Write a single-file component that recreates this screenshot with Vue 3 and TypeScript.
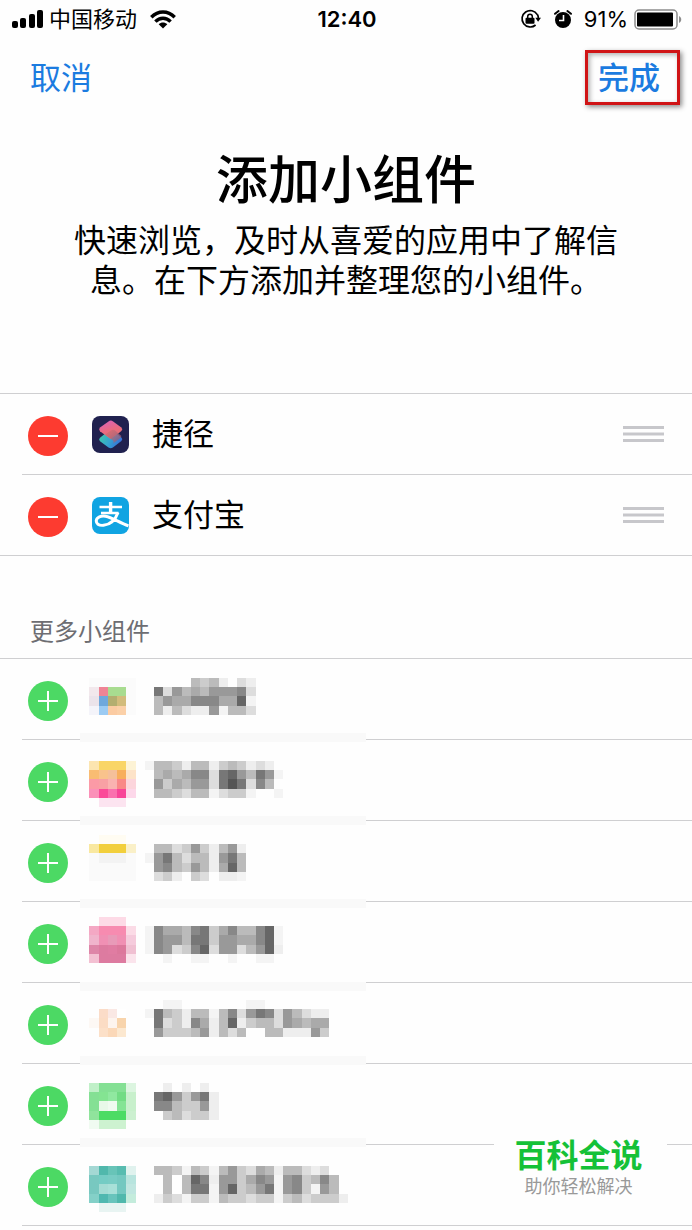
<script setup lang="ts">
interface Widget {
  id: string
  name: string
}

interface HiddenWidget {
  id: string
  top: number
  strip?: number
  icon: string[]
  label: string[]
}

interface Cell {
  x: number
  y: number
  fill: string
}

const active: Widget[] = [
  { id: 'shortcuts', name: '捷径' },
  { id: 'alipay', name: '支付宝' },
]

// Icon rows list one hex colour per cell; label rows hold one grey digit per cell.
const more: HiddenWidget[] = [
  {
    id: 'a', top: 19, strip: 74,
    icon: [
      'fbfbfb fbfbfb fbfbfb fbfbfb fbfbfb',
      'f2e8ec ef8495 a8dc90 a8dc90 fbfbfb',
      'ebe3ea 6fa8dc b3ae70 d2bc7c fbfbfb',
      'f4f4fa 9ccbf3 fbcba2 fbd0a8 fbfbfb',
    ],
    label: ['.....bcbe.de', '.7d9bab9998d', '.b9aa888aa6f', '.bebdee9fbbd'],
  },
  {
    id: 'b', top: 21, strip: 76,
    icon: [
      'fce5b0 f9d566 f9d566 f9d566 fdf3d5',
      'f9bc72 f9c38c f5c09a f8ae5c fde3c8',
      'fb9aa6 f8a0a4 fab2b0 f98887 fcd5dc',
      'fb90b8 fb4a98 fa70ae f84498 fdd8ea',
      '. fce4f0 fce4f0 fce4f0 .',
    ],
    label: ['fbbcebbecbcede.', '.baba88d769b79f', '.9cab99d757d8b.', '.bbcdbbfdccf..f'],
  },
  {
    id: 'c', top: 14, strip: 78,
    icon: [
      '. fffcf2 fffcf2 fffcf2 .',
      'f9e8a0 f2cf3c f2cf3c f2cf3c faf0c8',
      'fafafa f3f3f3 f3f3f3 f3f3f3 fafafa',
      'fafafa fafafa fafafa fafafa fafafa',
      'fafafa fafafa fafafa fafafa fafafa',
    ],
    label: ['', '.bbdc9ceb9e', 'f97bdbbe97b', '.98bc9bea6b', '.dce.cd.eef'],
  },
  {
    id: 'd', top: 15, strip: 80,
    icon: [
      '. fddae6 fddae6 fddae6 .',
      'f4a8c4 f78bb0 f78bb0 f78bb0 fbdbe6',
      'f0b4cc f090b4 e89ab8 f08fb3 f5cbdc',
      'de86a8 dd7ba0 e07ca2 dc789c f0c0d2',
      'f3c0d2 dd7ba0 dd7ba0 dd7ba0 fbe4ec',
    ],
    label: ['', 'f8aab87ca8bb86f', 'f899b77c99aa86f', 'f89dc86d99db96e', '..f..ff..f..ff.'],
  },
  {
    id: 'e', top: 17, strip: 73,
    icon: [
      '. . . . .',
      '. fbdcc8 fae8e4 ffffff .',
      'fdf8f4 fbdcc4 fdf4ee f8d4ac .',
      '. fce0c8 fbd8b8 fce8d0 .',
    ],
    label: ['..ff.......ff', 'f7bcebbfb8d978d9bdee', '.7dce8aeb6ecbbd9abaa', '.9cccb9ebdb..bbeee9c'],
  },
  {
    id: 'f', top: 19, strip: 74,
    icon: [
      'c0f0c8 84e094 84e094 84e094 dcf5e0',
      '84e094 84e492 90e8a0 72dc84 c8f0cc',
      '84e094 e8f8e8 f0faf0 84e494 c8f0cc',
      '90e49c 4cdc64 4cdc64 4cdc64 ccf0d0',
      'f0fbf1 cdf2d0 cdf2d0 cdf2d0 .',
    ],
    label: ['..e.e.e.', '.769c97e', '.88bcc9e', '..cbdcce'],
  },
  {
    id: 'g', top: 21,
    icon: [
      'a4d8d4 50b8ac 68c4b8 58bcb0 e0f2ee',
      '78c8c0 74ccc4 78ccc4 74c8c0 b8e4de',
      '78c8c0 a4dcd4 a8e0d8 74c8c0 c0e6e0',
      '84d0c8 50b8b0 68c4bc 50b8ac c4ecdc',
      '. e8f4f2 e8f4f2 e8f4f2 .',
    ],
    label: ['.bbcfbcfb9cdabebbded..', '..b.b68e99ca89f98cb8b.', '..b.b77f96cb97f98cf9b.', '.ecdfccfbccdccfcbdccce'],
  },
]

const LABEL_COLUMN = 6

function cells(widget: HiddenWidget): Cell[] {
  const out: Cell[] = []
  widget.icon.forEach((row, y) =>
    row.split(' ').forEach((c, x) => {
      if (c !== '.') out.push({ x, y, fill: '#' + c })
    }),
  )
  widget.label.forEach((row, y) =>
    [...row].forEach((c, x) => {
      if (c === '.') return
      out.push({ x: x + LABEL_COLUMN, y, fill: c === 'f' ? '#f4f4f4' : '#' + c + c + c })
    }),
  )
  return out
}
</script>

<template>
  <div class="page">
    <div class="status">
      <div class="side">
        <svg class="signal" width="32" height="20" viewBox="0 0 32 20" aria-hidden="true">
          <rect x="0" y="12" width="6" height="7" rx="2" />
          <rect x="8" y="9" width="6" height="10" rx="2" />
          <rect x="17" y="5" width="6" height="14" rx="2" />
          <rect x="25" y="1" width="6" height="18" rx="2" />
        </svg>
        <span class="carrier">中国移动</span>
        <svg class="wifi" width="26" height="19" viewBox="0 0 26 19" aria-hidden="true">
          <g fill="none" stroke="#000" stroke-width="3.4">
            <path d="M1.3 7.2C8 .2 18 .2 24.7 7.2" />
            <path d="M5.4 11.6c4.4-4.5 10.8-4.5 15.2 0" />
          </g>
          <path d="M8.7 14.2c2.4-2.3 6.200-2.3 8.600 0L13 18.600z" />
        </svg>
      </div>
      <span class="time">12:40</span>
      <div class="side right">
        <svg width="21" height="20" viewBox="0 0 21 20" aria-hidden="true">
          <path d="M17.300 5.600A8.200 8.200 0 1 0 15.600 16" fill="none" stroke="#000" stroke-width="1.700" />
          <path d="M17.300 5.200c.9 1.400 1.200 2.900 1.100 4.700" fill="none" stroke="#000" stroke-width="1.700" />
          <path d="M15.300 8.800h5.700l-2.900 4z" />
          <rect x="5.500" y="8.800" width="9" height="6" rx="1" />
          <path d="M7.700 9.500V7.600a2.300 2.300 0 0 1 4.600 0v1.900" fill="none" stroke="#000" stroke-width="1.500" />
        </svg>
        <svg class="alarm" width="20" height="20" viewBox="0 0 20 20" aria-hidden="true">
          <circle cx="10" cy="11" r="8" />
          <path d="M2 4.800L5.600 2M14.400 2L18 4.800" stroke="#000" stroke-width="2" stroke-linecap="round" />
          <path d="M10.500 6v5.500H6" fill="none" stroke="#fff" stroke-width="1.600" />
        </svg>
        <span class="percent">91%</span>
        <svg width="48" height="21" viewBox="0 0 48 21" aria-hidden="true">
          <rect x="1" y="1" width="42" height="19" rx="4" fill="none" stroke="#8c8c8c" stroke-width="1.500" />
          <rect x="3" y="3.500" width="36" height="14" rx="1" />
          <path d="M45 7c3 1.500 3 5.500 0 7z" fill="#8c8c8c" />
        </svg>
      </div>
    </div>

    <nav class="nav">
      <button type="button" class="cancel">取消</button>
      <button type="button" class="done">完成</button>
    </nav>

    <header class="intro">
      <h1>添加小组件</h1>
      <p>快速浏览，及时从喜爱的应用中了解信息。在下方添加并整理您的小组件。</p>
    </header>

    <ul class="list active">
      <li v-for="w in active" :key="w.id" class="row">
        <button type="button" class="toggle" :aria-label="'移除' + w.name">
          <svg width="40" height="40" viewBox="0 0 40 40">
            <circle cx="20" cy="20" r="20" fill="#fd3b30" />
            <path d="M10 20h20" stroke="#fff" stroke-width="2" />
          </svg>
        </button>
        <svg v-if="w.id === 'shortcuts'" class="app" width="37" height="37" viewBox="0 0 37 37" aria-hidden="true">
          <defs>
            <linearGradient id="sc-low" x1="0" y1="0.300" x2="1" y2="0.700">
              <stop offset="0" stop-color="#3fc9a8" />
              <stop offset=".5" stop-color="#35a3d0" />
              <stop offset="1" stop-color="#3568dc" />
            </linearGradient>
            <linearGradient id="sc-high" x1="0.300" y1="0" x2="0.700" y2="1">
              <stop offset="0" stop-color="#dc62b4" />
              <stop offset=".5" stop-color="#ea6a80" />
              <stop offset="1" stop-color="#e2706c" />
            </linearGradient>
            <linearGradient id="sc-fold" x1="0" y1="0" x2="1" y2="1">
              <stop offset="0" stop-color="#e2706c" />
              <stop offset="1" stop-color="#7a5c84" />
            </linearGradient>
          </defs>
          <rect width="37" height="37" rx="8" fill="#20214f" />
          <path d="M8 21.800l9-7.400q1.800-1.400 3.600 0l8.800 7.200q1.800 1.700 0 3.400l-8.500 6.400q-2.200 1.600-4.400 0L8 25.200q-1.800-1.700 0-3.400z" fill="url(#sc-low)" />
          <path d="M8 11.600l8.500-6.200q2.300-1.600 4.600 0l8.300 6.200q1.800 1.700 0 3.400l-3.800 3-7 5L8 15.200q-1.800-1.800 0-3.600z" fill="url(#sc-high)" />
          <path d="M18.500 14.800q2.500-1.800 4.600-.2l6.300 5.400q-.4 1.800-1.600 2.600L21 27.400q1.600-1.800 0-3l-8-5.600z" fill="url(#sc-fold)" opacity=".75" />
        </svg>
        <svg v-else class="app" width="37" height="37" viewBox="0 0 37 37" aria-hidden="true">
          <rect width="37" height="37" rx="8" fill="#10a4e2" />
          <g fill="none" stroke="#fff">
            <path d="M7.500 10h22.500M9 16h17.500" stroke-width="2.400" />
            <path d="M18.600 5v11" stroke-width="3.400" />
            <path d="M26 15.500c-2.200 6.200-7.200 12-14.500 12.800C6.500 28.800 4 26.600 4.300 23.500 4.800 20 9 18.500 13.500 19.200 20 20.300 27 25.400 36.500 28.800" stroke-width="3" />
          </g>
        </svg>
        <span class="name">{{ w.name }}</span>
        <svg class="handle" width="41" height="16" viewBox="0 0 41 16" fill="#c7c7cb" aria-hidden="true">
          <rect width="41" height="3" />
          <rect y="6.500" width="41" height="3" />
          <rect y="13" width="41" height="3" />
        </svg>
      </li>
    </ul>

    <h2>更多小组件</h2>

    <ul class="list more">
      <li v-for="w in more" :key="w.id" class="row">
        <button type="button" class="toggle" aria-label="添加">
          <svg width="40" height="40" viewBox="0 0 40 40">
            <circle cx="20" cy="20" r="20" fill="#4cd964" />
            <path d="M10 20h20M20 10v20" stroke="#fff" stroke-width="2" />
          </svg>
        </button>
        <svg class="mosaic" width="286" height="80" viewBox="0 0 286 80" aria-hidden="true">
          <rect v-if="w.strip" :y="w.strip" width="286" height="9" fill="#f9f9f9" />
          <g :transform="`translate(9.4 ${w.top}) scale(9.23)`">
            <rect v-for="(c, i) in cells(w)" :key="i" :x="c.x" :y="c.y" width="1" height="1" :fill="c.fill" />
          </g>
        </svg>
      </li>
    </ul>

    <aside class="brand">
      <strong>百科全说</strong>
      <span>助你轻松解决</span>
    </aside>
  </div>
</template>

<style>
body {
  margin: 0;
  background: #fefefe;
}
</style>

<style scoped>
.page {
  position: relative;
  min-height: 100vh;
  box-sizing: border-box;
  padding-bottom: 4px;
  background: #fefefe;
  color: #000;
  font-family: Inter, "Noto Sans CJK SC", sans-serif;
}

button {
  margin: 0;
  padding: 0;
  border: 0;
  background: none;
  font: inherit;
}

svg {
  display: block;
  flex: none;
}

.status {
  display: flex;
  align-items: center;
  height: 38px;
  padding: 0 10px 0 12px;
  font-size: 22px;
  line-height: 32px;
}

.side {
  display: flex;
  flex: 1;
  align-items: center;
}

.right {
  justify-content: flex-end;
}

.carrier {
  margin: 0 13px 0 5px;
}

.time {
  font-weight: 600;
}

.alarm {
  margin: 0 11px 0 12px;
}

.percent {
  margin-right: 6px;
}

.nav {
  display: flex;
  justify-content: space-between;
  align-items: center;
  height: 79px;
  padding: 0 12px 0 30px;
  font-size: 31px;
  line-height: 49px;
}

.cancel {
  color: #1b7be0;
}

.done {
  padding: 0 17px 0 10px;
  border: 3px solid #d01416;
  box-shadow: 2px 2px 5px rgba(0, 0, 0, 0.45), inset 2px 2px 5px rgba(0, 0, 0, 0.3);
  color: #1b7be0;
  font-weight: 500;
}

.intro {
  padding: 28px 16px 92px;
  text-align: center;
}

h1 {
  margin: 0;
  font-size: 52px;
  line-height: 72px;
  font-weight: 500;
}

.intro p {
  max-width: 560px;
  margin: 4px auto 0;
  font-size: 32px;
  line-height: 40px;
}

.list {
  margin: 0;
  padding: 0 0 0 22px;
  border-top: 1px solid #cfcfd1;
  list-style: none;
}

.row {
  display: flex;
  align-items: center;
  height: 80px;
  padding-left: 6px;
  border-bottom: 1px solid #cfcfd1;
}

.active {
  border-bottom: 1px solid #cfcfd1;
}

.active .row:last-child {
  border-bottom: 0;
}

.toggle {
  margin-top: 4px;
  border-radius: 50%;
}

.app {
  margin: 0 23px 0 24px;
}

.name {
  flex: 1;
  font-size: 31px;
  line-height: 48px;
}

.handle {
  margin-right: 28px;
}

h2 {
  margin: 0;
  padding: 56px 30px 6px;
  color: #6d6d72;
  font-size: 24px;
  line-height: 40px;
  font-weight: 400;
}

.mosaic {
  margin-left: 12px;
  overflow: visible;
  shape-rendering: crispEdges;
}

.brand {
  position: absolute;
  right: 25px;
  bottom: 20px;
  display: flex;
  flex-direction: column;
  align-items: center;
  box-sizing: border-box;
  width: 173px;
  padding: 2px 4px 12px 0;
  background: #fefefe;
}

.brand strong {
  color: #15c137;
  font-size: 32px;
  line-height: 40px;
  font-weight: 700;
}

.brand span {
  color: #999;
  font-size: 18px;
  line-height: 22px;
}
</style>
